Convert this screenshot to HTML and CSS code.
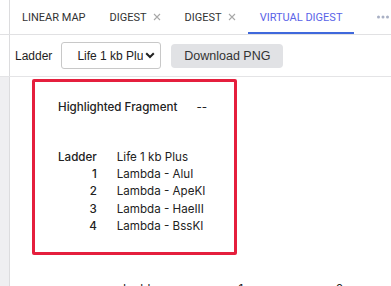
FILE: index.html
```html
<!DOCTYPE html>
<html lang="en">
<head>
    <meta charset="UTF-8">
    <meta name="viewport" content="width=device-width, initial-scale=1.0">
    <title>Virtual Digest</title>
    <link rel="stylesheet" href="styles.css">
</head>
<body>

    <div class="app">
        <!-- Tab strip -->
        <div class="row tabs-row">
            <div class="gutter"></div>
            <div class="tabs">
                <div class="tab">LINEAR MAP</div>
                <div class="tab">DIGEST
                    <svg class="close" width="8" height="8" viewBox="0 0 8 8"><path d="M1 1L7 7M7 1L1 7"/></svg>
                </div>
                <div class="tab">DIGEST
                    <svg class="close" width="8" height="8" viewBox="0 0 8 8"><path d="M1 1L7 7M7 1L1 7"/></svg>
                </div>
                <div class="tab active">VIRTUAL DIGEST</div>
                <div class="tab-more">
                    <svg width="12" height="4" viewBox="0 0 12 4"><circle cx="1.5" cy="2" r="1.5"/><circle cx="6" cy="2" r="1.5"/><circle cx="10.5" cy="2" r="1.5"/></svg>
                </div>
            </div>
        </div>

        <!-- Toolbar -->
        <div class="row toolbar-row">
            <div class="gutter"></div>
            <div class="toolbar">
                <span class="toolbar-label">Ladder</span>
                <div class="select">
                    <span class="select-text">Life 1 kb Plus</span>
                    <svg class="chevron" width="10" height="7" viewBox="0 0 10 7"><path d="M1.2 1.2L5 5L8.8 1.2"/></svg>
                </div>
                <button class="btn">Download PNG</button>
            </div>
        </div>

        <!-- Content -->
        <div class="row body-row">
            <div class="gutter gray"></div>
            <div class="content">
                <div class="legend">
                    <table class="info">
                        <tr>
                            <td class="lbl">Highlighted Fragment</td>
                            <td class="val">--</td>
                        </tr>
                    </table>
                    <table class="lanes">
                        <tr><td class="num">Ladder</td><td>Life 1 kb Plus</td></tr>
                        <tr><td class="num">1</td><td>Lambda - AluI</td></tr>
                        <tr><td class="num">2</td><td>Lambda - ApeKI</td></tr>
                        <tr><td class="num">3</td><td>Lambda - HaeIII</td></tr>
                        <tr><td class="num">4</td><td>Lambda - BssKI</td></tr>
                    </table>
                </div>
                <div class="gel-head">
                    <span class="gel-ladder">Ladder</span>
                    <span class="gel-lane1">1</span>
                    <span class="gel-lane2">2</span>
                </div>
            </div>
        </div>
    </div>

</body>
</html>
```

FILE: styles.css
```css
body {
    margin: 0;
    padding: 0;
    background-color: #ffffff;
    color: #222222;
    font-family: Inter, 'Noto Sans', sans-serif;
    overflow: hidden;
    height: 286px;
}

.app {
    display: flex;
    flex-direction: column;
    height: 286px;
    overflow: hidden;
}

.row {
    display: flex;
    flex-shrink: 0;
}

.gutter {
    width: 9px;
    flex-shrink: 0;
    border-right: 1px solid #dcdcde;
}

.gutter.gray {
    background-color: #efeff1;
}

/* Tabs */
.tabs-row {
    height: 35px;
    box-sizing: border-box;
    border-bottom: 1px solid #e1e1e3;
}

.tabs {
    display: flex;
    flex-grow: 1;
    font-family: Roboto, 'Noto Sans', sans-serif;
    font-size: 11px;
    color: #333333;
    white-space: nowrap;
}

.tab {
    display: flex;
    align-items: center;
    flex-shrink: 0;
    padding: 0 12px;
    height: 34px;
    box-sizing: border-box;
}

.tab .close {
    margin-left: 6px;
    fill: none;
    stroke: #a8a8a8;
    stroke-width: 1.1;
}

.tab.active {
    color: #5a63e8;
    border-bottom: 2px solid #3f68dc;
    padding-top: 2px;
}

.tab-more {
    display: flex;
    align-items: center;
    margin-left: 23px;
    fill: #a9b0c4;
}

/* Toolbar */
.toolbar-row {
    height: 42px;
    box-sizing: border-box;
    border-bottom: 1px solid #e4e4e6;
}

.toolbar {
    display: flex;
    align-items: center;
    padding-left: 5px;
}

.toolbar-label {
    font-family: 'Liberation Sans', Arial, sans-serif;
    font-size: 12px;
    color: #1e1e1e;
    margin-right: 9px;
}

.select {
    display: flex;
    align-items: center;
    width: 100px;
    height: 27px;
    box-sizing: border-box;
    border: 1px solid #c8c8c8;
    border-radius: 3px;
    padding: 0 5px 0 15px;
    font-family: 'Liberation Sans', Arial, sans-serif;
    font-size: 12px;
    color: #222222;
}

.select-text {
    width: 66px;
    overflow: hidden;
    white-space: nowrap;
    flex-shrink: 0;
}

.chevron {
    margin-left: auto;
    fill: none;
    stroke: #222222;
    stroke-width: 2;
}

.btn {
    margin-left: 10px;
    height: 24px;
    width: 112px;
    border: none;
    border-radius: 4px;
    background-color: #e1e2e5;
    color: #333333;
    font-family: 'Liberation Sans', Arial, sans-serif;
    font-size: 12.5px;
    padding: 0;
}

/* Content */
.body-row {
    flex-grow: 1;
    flex-shrink: 1;
}

.content {
    flex-grow: 1;
    padding: 2px 0 0 22px;
}

.legend {
    width: 176px;
    height: 152px;
    border: 3px solid #e51f3d;
    border-radius: 2px;
    padding: 18px 0 0 23px;
    box-sizing: content-box;
    font-size: 11.6px;
    color: #222222;
}

.legend table {
    border-collapse: collapse;
}

.legend td {
    padding: 0;
}

.info .lbl {
    font-weight: 500;
    padding-right: 19px;
}

.lanes {
    margin-top: 34px;
}

.lanes td {
    height: 17.4px;
}

.lanes .num {
    text-align: right;
    font-weight: 500;
    padding-right: 20px;
    width: 37px;
}

.gel-head {
    display: flex;
    font-size: 11.6px;
    margin-top: 27px;
    color: #222222;
}

.gel-ladder {
    margin-left: 91px;
}

.gel-lane1 {
    margin-left: 77px;
}

.gel-lane2 {
    margin-left: 93px;
}
```
